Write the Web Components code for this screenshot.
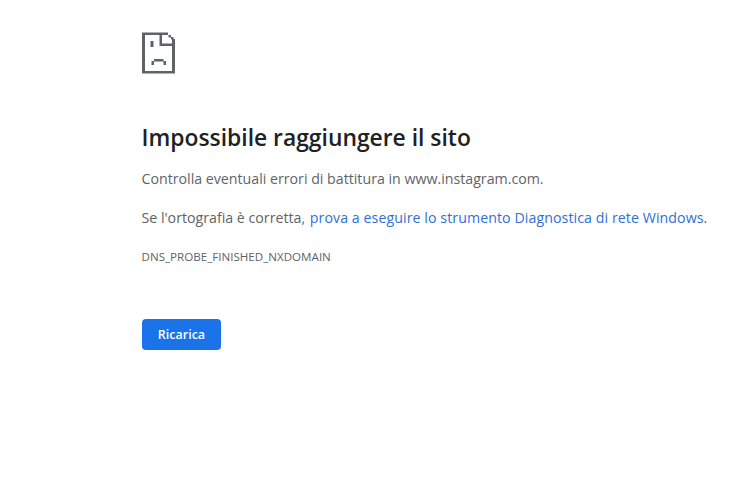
<!DOCTYPE html>
<html>
<head>
<meta charset="utf-8">
<style>
  html, body { margin: 0; background: #fff; }
  body { font-family: "Open Sans", sans-serif; }
</style>
</head>
<body>
<error-page>
  <sad-file slot="icon"></sad-file>
  <span slot="title">Impossibile raggiungere il sito</span>
  <error-line>Controlla eventuali errori di battitura in www.instagram.com.</error-line>
  <error-line>Se l'ortografia è corretta, <error-link>prova a eseguire lo strumento Diagnostica di rete Windows</error-link>.</error-line>
  <span slot="code">DNS_PROBE_FINISHED_NXDOMAIN</span>
  <reload-button slot="action">Ricarica</reload-button>
</error-page>

<script>
class ErrorPage extends HTMLElement {
    constructor(){
        super();
        this.attachShadow({mode:'open'});
        this.shadowRoot.innerHTML = `
        <style>
            :host {
                display: flex;
                flex-direction: column;
                align-items: flex-start;
                height: 480px;
                box-sizing: border-box;
                padding: 32px 0 0 141.5px;
                overflow: hidden;
            }
            .icon { height: 42px; margin-left: 0.5px; }
            h1 {
                margin: 49px 0 0;
                font-size: 22.85px;
                line-height: 30px;
                font-weight: 600;
                color: #202124;
                white-space: nowrap;
            }
            .body {
                display: flex;
                flex-direction: column;
                gap: 19px;
                margin-top: 16px;
            }
            .code {
                margin-top: 20px;
                font-size: 11.6px;
                line-height: 18px;
                color: #5f6368;
                white-space: nowrap;
            }
            .action { margin-top: 53px; margin-left: 0.5px; }
        </style>
        <div class="icon"><slot name="icon"></slot></div>
        <h1><slot name="title"></slot></h1>
        <div class="body"><slot></slot></div>
        <div class="code"><slot name="code"></slot></div>
        <div class="action"><slot name="action"></slot></div>
        `;
    }
}

class SadFile extends HTMLElement {
    constructor(){
        super();
        this.attachShadow({mode:'open'});
        this.shadowRoot.innerHTML = `
        <style>
            :host { display: block; width: 34px; height: 42px; }
            svg { display: block; }
        </style>
        <svg width="34" height="42" viewBox="0 0 34 42">
            <path fill="#5f6368" d="M0 0.5H26V3H3V39H30V7H33V41.5H0Z"/>
            <path fill="#5f6368" d="M17.5 1H20V11.5H33V14H17.5Z"/>
            <path fill="#5f6368" d="M26.5 3H29V5.5H26.5ZM29 5H31.5V7.5H29Z"/>
            <path fill="#5f6368" d="M8.5 9H11.5V15H8.5ZM12 27H21.5V29H24V33H21.5V29.5H12V33H9.5V29H12Z"/>
        </svg>
        `;
    }
}

class ErrorLine extends HTMLElement {
    constructor(){
        super();
        this.attachShadow({mode:'open'});
        this.shadowRoot.innerHTML = `<style>
            :host {
                display: block;
                font-size: 14.2px;
                line-height: 20px;
                color: #5f6368;
                white-space: nowrap;
            }
        </style><slot></slot>`;
    }
}

class ErrorLink extends HTMLElement {
    constructor(){
        super();
        this.attachShadow({mode:'open'});
        this.shadowRoot.innerHTML = `<style>
            :host { display: inline; color: #2f70d8; letter-spacing: 0.07px; margin-left: 1px; }
        </style><slot></slot>`;
    }
}

class ReloadButton extends HTMLElement {
    constructor(){
        super();
        this.attachShadow({mode:'open'});
        this.shadowRoot.innerHTML = `<style>
            :host { display: block; }
            button {
                display: block;
                width: 79px;
                height: 31px;
                padding: 0;
                border: none;
                border-radius: 4px;
                background: #1a73e8;
                color: #fff;
                font: 600 12.5px/31px "Open Sans", sans-serif;
            }
        </style><button><slot></slot></button>`;
    }
}

customElements.define("error-page",ErrorPage);
customElements.define("sad-file",SadFile);
customElements.define("error-line",ErrorLine);
customElements.define("error-link",ErrorLink);
customElements.define("reload-button",ReloadButton);
</script>
</body>
</html>
